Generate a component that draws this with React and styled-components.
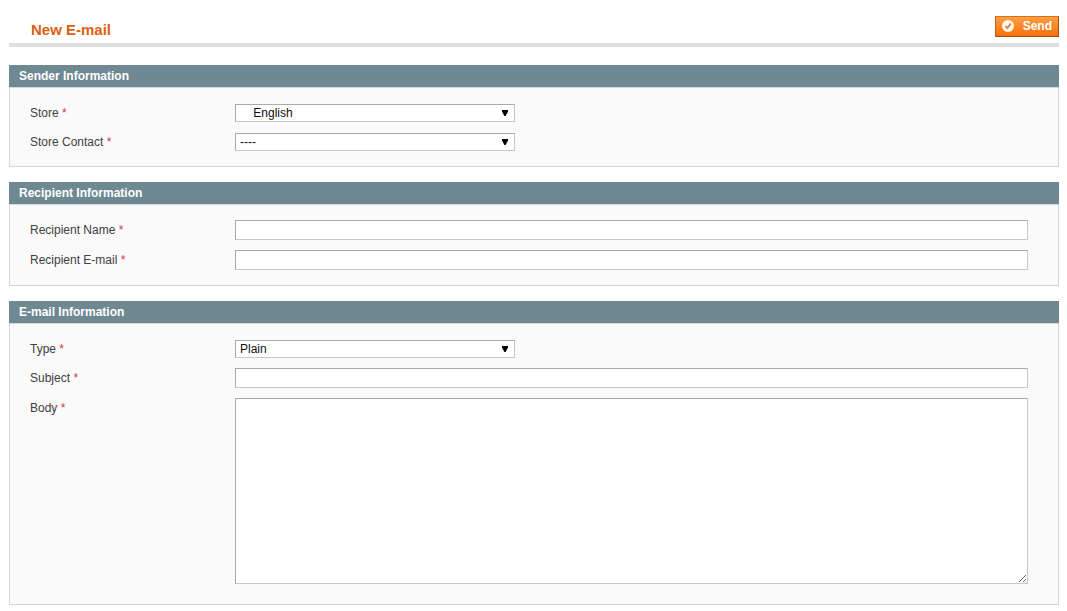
import { useState } from 'react';
import styled, { createGlobalStyle } from 'styled-components';

const GlobalStyle = createGlobalStyle`
  * {
    box-sizing: border-box;
  }

  body {
    margin: 0;
    background: #fff;
    color: #404040;
    font: 12px/18px "Liberation Sans", Arial, Helvetica, sans-serif;
  }
`;

const Page = styled.form`
  padding: 16px 8px 6px 9px;
`;

const Header = styled.header`
  display: flex;
  justify-content: space-between;
  align-items: flex-start;
  margin-bottom: 18px;
  padding-bottom: 2px;
  border-bottom: 4px solid #dfdfdf;
`;

const Title = styled.h1`
  margin: 5px 0 0 22px;
  color: #dc6013;
  font-size: 15px;
  line-height: 18px;
`;

const SendButton = styled.button`
  display: flex;
  align-items: flex-start;
  gap: 8px;
  height: 21px;
  margin-bottom: 4px;
  padding: 0 6px 0 5px;
  border: 1px solid;
  border-color: #d9701c #a85210 #a04a10 #c85f14;
  background: linear-gradient(#fda043, #f7700c);
  color: #fff;
  font: bold 12px/18px "Liberation Sans", Arial, Helvetica, sans-serif;
  cursor: pointer;

  svg {
    margin-top: 2px;
  }

  &:hover {
    background: #f77c16;
  }
`;

const Section = styled.section`
  margin-bottom: 15px;

  &:last-child {
    margin-bottom: 0;
  }
`;

const SectionTitle = styled.h2`
  margin: 0;
  padding: 2px 10px;
  background: #6f8992;
  color: #fff;
  font-size: 12px;
  line-height: 18px;
`;

const SectionBody = styled.div`
  padding: 10px 30px 10px 20px;
  border: 1px solid #d6d6d6;
  background: #fafafa;
`;

const Row = styled.div`
  display: grid;
  grid-template-columns: 205px 1fr;
  align-items: start;
  padding: 5px 0;
`;

const Label = styled.label`
  padding-top: 1px;
`;

const Required = styled.span`
  color: #cc3a3a;
`;

const SelectBox = styled.div`
  position: relative;
  width: 280px;
  margin-top: 1px;
`;

const Arrow = styled.svg`
  position: absolute;
  top: 6px;
  right: 6px;
  pointer-events: none;
`;

const fieldBorder = '#aaa #c8c8c8 #c8c8c8 #aaa';

const Select = styled.select`
  display: block;
  width: 100%;
  height: 18px;
  padding: 0 20px 0 4px;
  border: 1px solid;
  border-color: ${fieldBorder};
  border-radius: 0;
  background: #fff;
  color: #111;
  font: 12px/16px "Liberation Sans", Arial, Helvetica, sans-serif;
  appearance: none;
`;

const Input = styled.input`
  width: 100%;
  height: 20px;
  padding: 2px;
  border: 1px solid;
  border-color: ${fieldBorder};
  background: #fff;
  font: 12px/14px "Liberation Sans", Arial, Helvetica, sans-serif;
`;

const TextArea = styled.textarea`
  display: block;
  width: 100%;
  height: 186px;
  margin-bottom: 5px;
  padding: 2px;
  border: 1px solid;
  border-color: ${fieldBorder};
  background: #fff;
  font: 12px/18px "Liberation Sans", Arial, Helvetica, sans-serif;
`;

const CheckIcon = () => (
  <svg width="14" height="14" viewBox="0 0 14 14" aria-hidden="true">
    <circle cx="7" cy="7" r="6" fill="#fff8ec" />
    <path d="M4.4 7l2 2.1L9.9 4.6" fill="none" stroke="#e07a35" strokeWidth="1.7" />
  </svg>
);

const Field = ({ id, label, children }) => (
  <Row>
    <Label htmlFor={id}>
      {label} <Required>*</Required>
    </Label>
    {children}
  </Row>
);

const SelectField = ({ id, label, options }) => (
  <Field id={id} label={label}>
    <SelectBox>
      <Select id={id} name={id}>
        {options.map((option) => (
          <option key={option}>{option}</option>
        ))}
      </Select>
      <Arrow width="8" height="6" viewBox="0 0 8 6" aria-hidden="true">
        <path d="M1 0h6v1.5L4.6 6H3.4L1 1.5z" fill="#000" />
      </Arrow>
    </SelectBox>
  </Field>
);

const InputField = ({ id, label, type = 'text' }) => (
  <Field id={id} label={label}>
    <Input id={id} name={id} type={type} />
  </Field>
);

const App = () => {
  const [body, setBody] = useState('');

  return (
    <>
      <GlobalStyle />
      <Page onSubmit={(e) => e.preventDefault()}>
        <Header>
          <Title>New E-mail</Title>
          <SendButton type="submit">
            <CheckIcon />
            Send
          </SendButton>
        </Header>

        <Section>
          <SectionTitle>Sender Information</SectionTitle>
          <SectionBody>
            {/* store views are indented below their store */}
            <SelectField id="store" label="Store" options={['\u00a0\u00a0\u00a0\u00a0English']} />
            <SelectField id="contact" label="Store Contact" options={['----']} />
          </SectionBody>
        </Section>

        <Section>
          <SectionTitle>Recipient Information</SectionTitle>
          <SectionBody>
            <InputField id="name" label="Recipient Name" />
            <InputField id="email" label="Recipient E-mail" type="email" />
          </SectionBody>
        </Section>

        <Section>
          <SectionTitle>E-mail Information</SectionTitle>
          <SectionBody>
            <SelectField id="type" label="Type" options={['Plain']} />
            <InputField id="subject" label="Subject" />
            <Field id="body" label="Body">
              <TextArea id="body" name="body" value={body} onChange={(e) => setBody(e.target.value)} />
            </Field>
          </SectionBody>
        </Section>
      </Page>
    </>
  );
};

export default App;
